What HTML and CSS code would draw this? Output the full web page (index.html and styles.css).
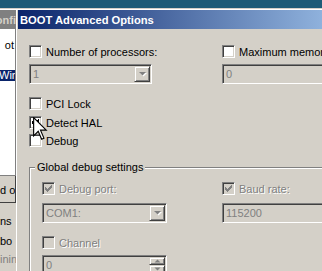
FILE: index.html
```html
<!DOCTYPE html>
<html lang="en">
<head>
	<meta charset="UTF-8">
	<title>BOOT Advanced Options</title>
	<link rel="stylesheet" href="styles.css">
</head>
<body>

	<div class="desk"></div>

	<div class="windows">
		<!-- window lying behind the dialog, only its right edge shows -->
		<div class="behind">
			<div class="behind-title"><span>onfi</span></div>
			<div class="behind-list">
				<div class="li li-end"><span>ot</span></div>
				<div class="li li-sel">Wind</div>
			</div>
			<div class="behind-box">d o</div>
			<div class="behind-line l-ns">ns</div>
			<div class="behind-line l-bo">bo</div>
			<div class="behind-line l-dis">inin</div>
		</div>

		<div class="dialog">
			<div class="title">BOOT Advanced Options</div>
			<div class="content">
				<div class="pair">
					<div class="col">
						<div class="check"><span class="box"></span><span class="label">Number of processors:</span></div>
						<div class="field combo"><span class="value">1</span><span class="drop"><svg width="9" height="6" viewBox="0 0 9 6"><polygon points="2,2 9,2 5.5,5.5" fill="#fff"/><polygon points="1,1 8,1 4.5,4.5" fill="#808080"/></svg></span></div>
					</div>
					<div class="col">
						<div class="check"><span class="box"></span><span class="label">Maximum memory:</span></div>
						<div class="field wide"><span class="value">0</span></div>
					</div>
				</div>

				<div class="check single first"><span class="box"></span><span class="label">PCI Lock</span></div>
				<div class="check single"><span class="box"><svg width="7" height="7" viewBox="0 0 7 7"><path d="M0 2h1v1h1v1h1v-1h1v-1h1v-1h1v-1h1v3h-1v1h-1v1h-1v1h-1v1h-1v-1h-1v-1h-1z" fill="#000"/></svg></span><span class="label">Detect HAL</span></div>
				<div class="check single last"><span class="box"></span><span class="label">Debug</span></div>

				<fieldset class="group">
					<legend>Global debug settings</legend>
					<div class="gpair">
						<div class="col">
							<div class="check off"><span class="box"><svg width="7" height="7" viewBox="0 0 7 7"><path d="M0 2h1v1h1v1h1v-1h1v-1h1v-1h1v-1h1v3h-1v1h-1v1h-1v1h-1v1h-1v-1h-1v-1h-1z" fill="#808080"/></svg></span><span class="label">Debug port:</span></div>
							<div class="field combo inner"><span class="value">COM1:</span><span class="drop"><svg width="9" height="6" viewBox="0 0 9 6"><polygon points="2,2 9,2 5.5,5.5" fill="#fff"/><polygon points="1,1 8,1 4.5,4.5" fill="#808080"/></svg></span></div>
						</div>
						<div class="col">
							<div class="check off"><span class="box"><svg width="7" height="7" viewBox="0 0 7 7"><path d="M0 2h1v1h1v1h1v-1h1v-1h1v-1h1v-1h1v3h-1v1h-1v1h-1v1h-1v1h-1v-1h-1v-1h-1z" fill="#808080"/></svg></span><span class="label">Baud rate:</span></div>
							<div class="field wide"><span class="value">115200</span></div>
						</div>
					</div>
					<div class="check off channel"><span class="box"></span><span class="label">Channel</span></div>
					<div class="field combo inner"><span class="value">0</span>
						<span class="spin">
							<span class="spin-btn"><svg width="7" height="4" viewBox="0 0 7 4"><polygon points="3.5,0.5 6.5,3.5 0.5,3.5" fill="#808080"/></svg></span>
							<span class="spin-btn"><svg width="7" height="4" viewBox="0 0 7 4"><polygon points="0.5,0.5 6.5,0.5 3.5,3.5" fill="#808080"/></svg></span>
						</span>
					</div>
				</fieldset>
			</div>
		</div>
	</div>

	<!-- mouse pointer over the Detect HAL box -->
	<svg class="cursor" width="15" height="24" viewBox="0 0 13 21"><path d="M0.5 0.5 L0.5 16.5 L4.5 12.5 L7.5 19.5 L9.5 18.5 L6.5 11.5 L11.5 11.5 Z" fill="#fff" stroke="#000" stroke-width="1"/></svg>

</body>
</html>
```

FILE: styles.css
```css
html,body{ margin: 0;padding: 0; }

body{width: 322px;height: 271px;overflow: hidden;position: relative;background: #1d5b78;
	font-family: "Liberation Sans", Arial, sans-serif;font-size: 11px;color: #000;}

.desk{height: 8px;}
.windows{display: flex;height: 263px;}

/* background window */
.behind{width: 16px;flex: none;background: #d4d0c8;border-top: 1px solid #d4d0c8;
	box-shadow: inset 0 1px #fff;padding-top: 1px;overflow: hidden;
	display: flex;flex-direction: column;white-space: nowrap;}
.behind-title{height: 19px;flex: none;background: #808080;color: #d4d0c8;font-weight: bold;
	display: flex;justify-content: flex-end;align-items: center;}
.behind-list{height: 147px;flex: none;box-sizing: border-box;background: #fff;padding-top: 10px;
	border-right: 1px solid #808080;border-bottom: 1px solid #808080;}
.li{height: 13px;line-height: 13px;overflow: hidden;}
.li-end{display: flex;justify-content: flex-end;padding-right: 1px;}
.li-sel{margin-top: 18px;height: 11px;line-height: 11px;background: #0a246a;color: #fff;text-indent: -1px;}
.behind-box{height: 27px;flex: none;box-sizing: border-box;line-height: 29px;overflow: hidden;
	border-right: 1px solid #404040;border-bottom: 1px solid #404040;}
.behind-line{height: 13px;line-height: 13px;flex: none;}
.l-ns{margin-top: 12px;}
.l-bo{margin-top: 7px;}
.l-dis{margin-top: 5px;color: #808080;}

/* dialog */
.dialog{flex: 1;background: #d4d0c8;border-top: 1px solid #d4d0c8;
	box-shadow: inset 1px 1px #fff;padding: 1px 0 0 2px;white-space: nowrap;overflow: hidden;}
.title{height: 19px;padding-left: 2px;display: flex;align-items: center;
	background: linear-gradient(to right, #0a246a 0, #a6caf0 357px);
	color: #fff;font-weight: bold;font-size: 11.2px;}
.content{padding: 16px 0 0 11px;}

.pair{display: grid;grid-template-columns: 193px 1fr;}
.gpair{display: grid;grid-template-columns: 180px 1fr;}

.check{display: flex;align-items: center;height: 13px;}
.check .label{margin-left: 4px;}
.check.off .label{color: #808080;text-shadow: 1px 1px #fff;}
.single.first{margin-top: 13px;}
.single{margin-top: 6px;}
.single.last{margin-top: 5px;}
.channel{margin-top: 13px;}

.box{width: 13px;height: 13px;flex: none;box-sizing: border-box;background: #fff;
	border: 1px solid;border-color: #808080 #fff #fff #808080;
	box-shadow: inset 1px 1px #404040, inset -1px -1px #d4d0c8;
	display: flex;align-items: center;justify-content: center;}
.check.off .box{background: #d4d0c8;}

.field{margin-top: 6px;height: 20px;box-sizing: border-box;width: 123px;
	border: 1px solid;border-color: #808080 #fff #fff #808080;
	box-shadow: inset 1px 1px #404040, inset -1px -1px #d4d0c8;
	background: #d4d0c8;color: #808080;display: flex;align-items: center;}
.field .value{flex: 1;padding-left: 3px;}
.field.wide{width: 110px;}
.field.inner{width: 125px;}
.gpair .field{margin-top: 8px;}

.drop{width: 16px;height: 16px;margin-right: 1px;box-sizing: border-box;
	border: 1px solid;border-color: #d4d0c8 #404040 #404040 #d4d0c8;
	box-shadow: inset 1px 1px #fff, inset -1px -1px #808080;
	display: flex;align-items: center;justify-content: center;}

.spin{width: 16px;height: 16px;margin-right: 1px;display: flex;flex-direction: column;align-self: flex-start;margin-top: 1px;}
.spin-btn{height: 8px;box-sizing: border-box;
	border: 1px solid;border-color: #d4d0c8 #404040 #404040 #d4d0c8;
	box-shadow: inset 1px 1px #fff, inset -1px -1px #808080;
	display: flex;align-items: center;justify-content: center;}

.group{margin: 14px 0 0 0;padding: 9px 0 0 12px;min-width: 0;height: 140px;
	border: 1px solid #808080;border-right: none;box-shadow: inset 1px 1px #fff;}
.group legend{padding: 0 2px;margin-left: -7px;background: #d4d0c8;}

.cursor{position: absolute;left: 33px;top: 117px;}
```
